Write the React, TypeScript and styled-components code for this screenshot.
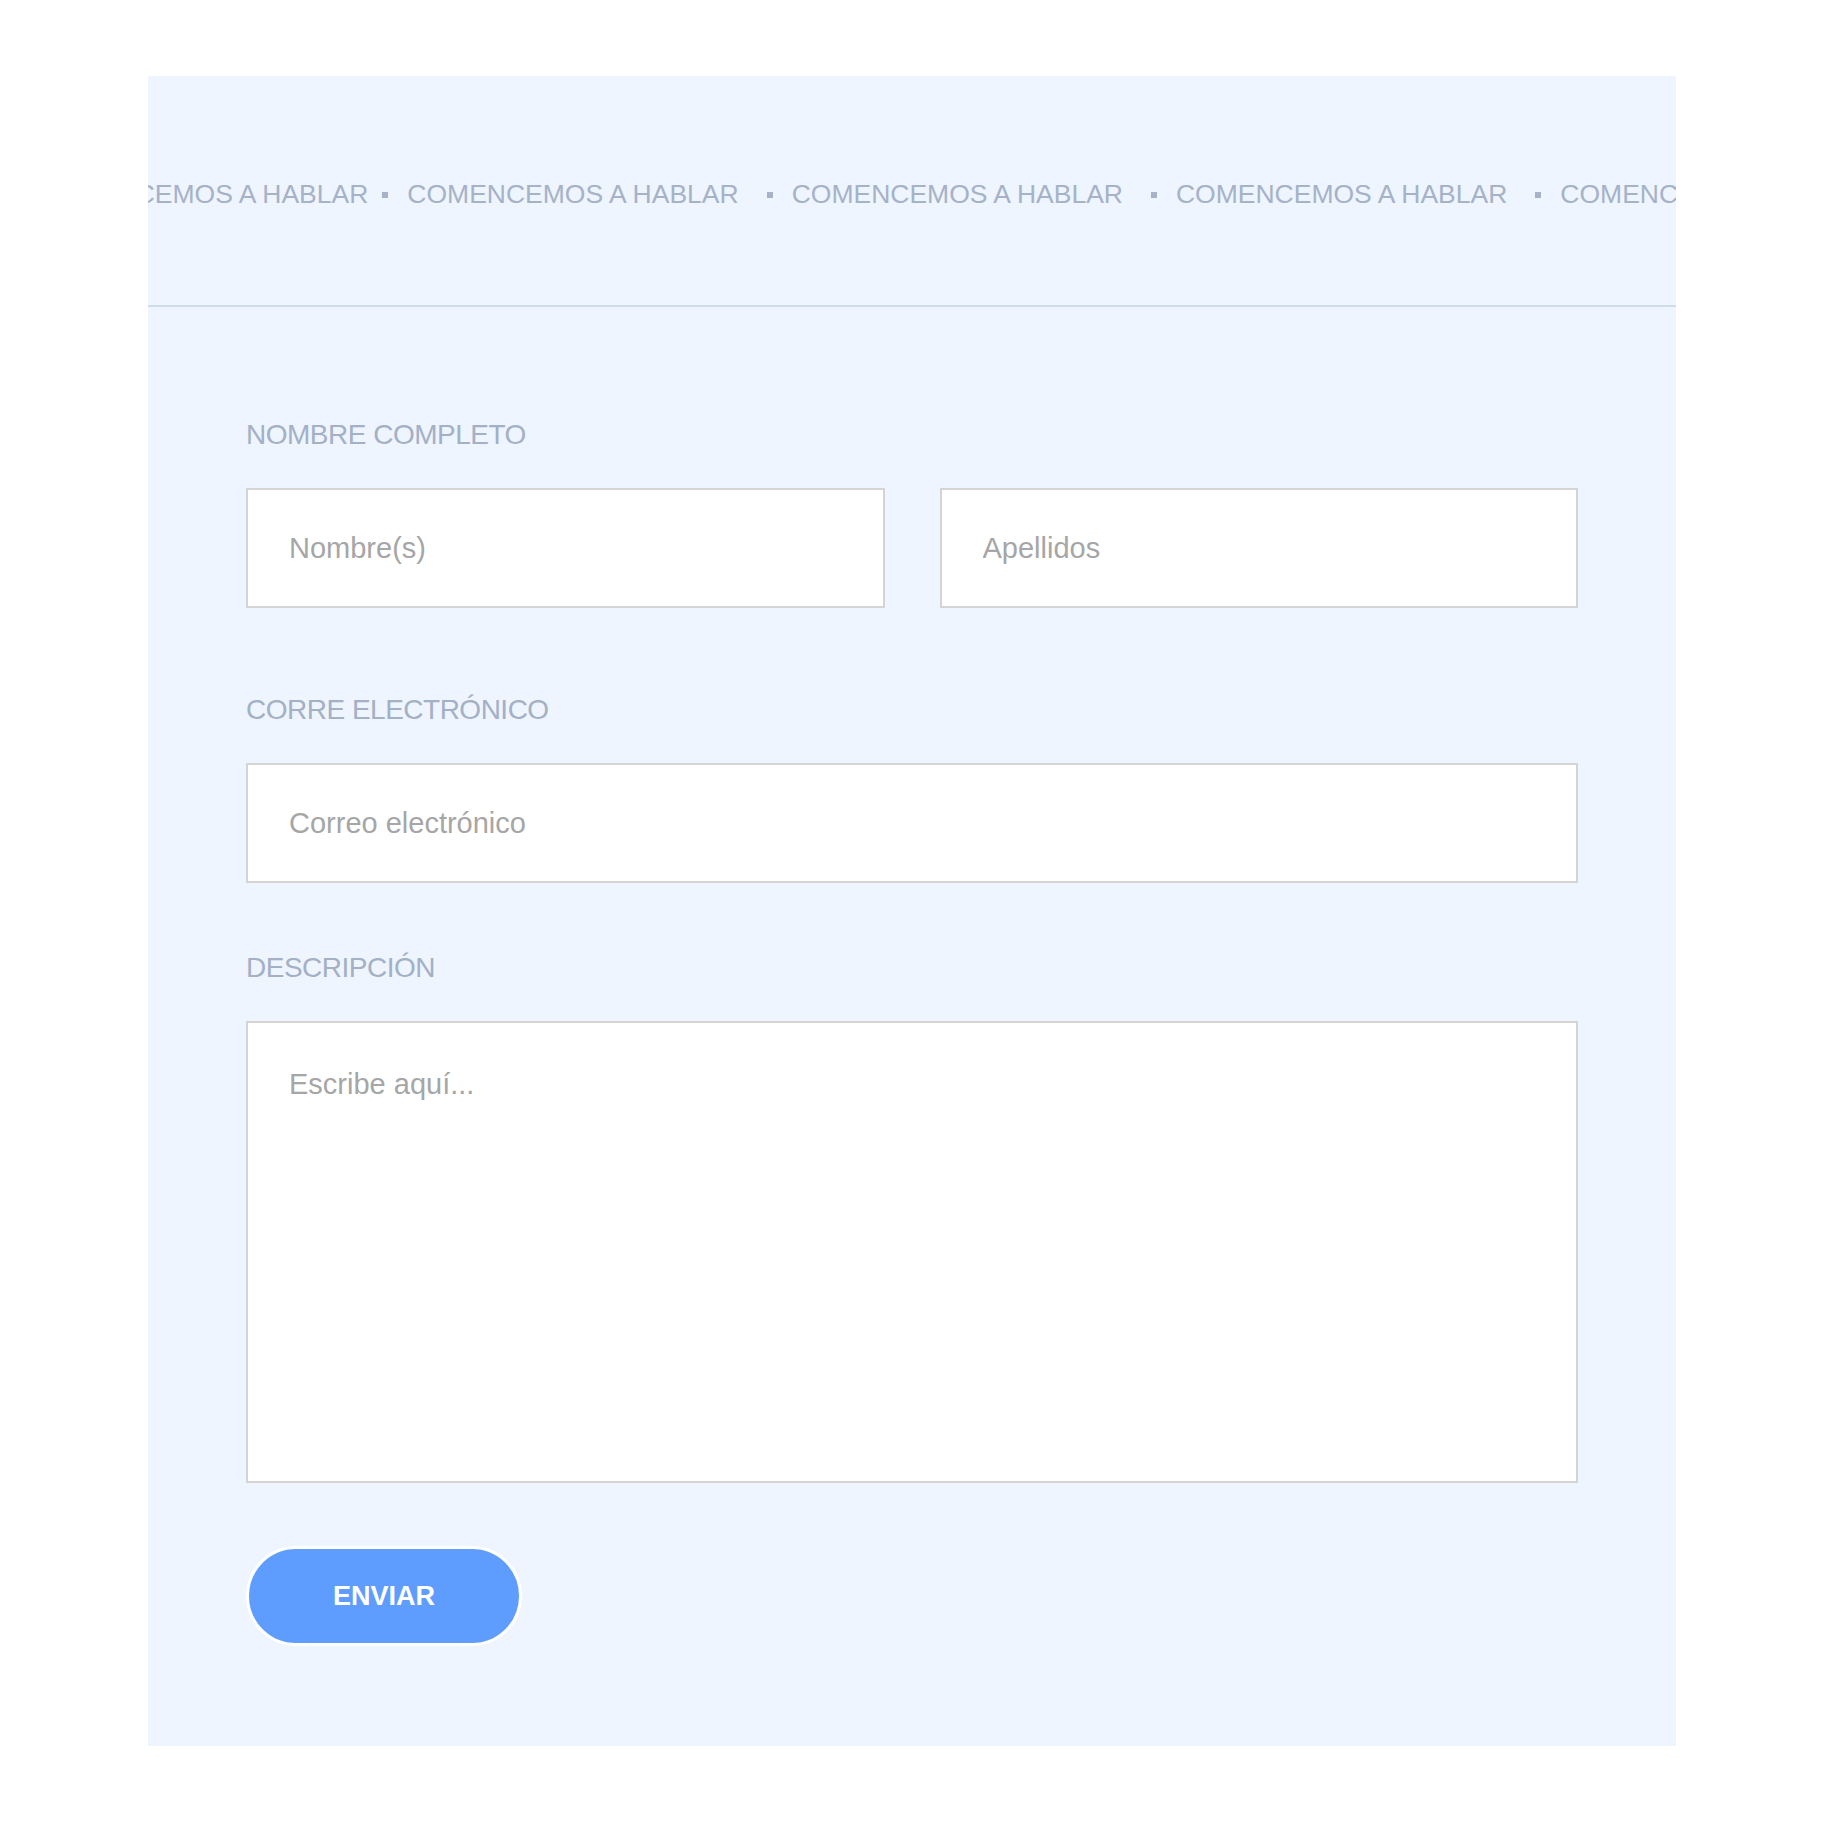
import React from 'react'
import styled, { createGlobalStyle } from 'styled-components'

const GlobalStyle = createGlobalStyle`
  body {
    margin: 0;
    background: #ffffff;
    font-family: "Liberation Sans", Arial, sans-serif;
  }
`

const Panel = styled.section`
  width: 1528px;
  margin: 76px auto 0 auto;
  background-color: #eef5ff;
  overflow: hidden;
`

const Marquee = styled.div`
  padding: 103px 0 96px 0;
  border-bottom: 2px solid #d0dcec;
  overflow: hidden;
`

// the strip is scrolled part way, so the first phrase is cut at the left edge
const Track = styled.div`
  display: flex;
  align-items: center;
  white-space: nowrap;
  transform: translateX(-111px);
`

const MarqueeText = styled.span`
  font-size: 26.5px;
  line-height: 30px;
  color: #a5b2c7;
`

const Dot = styled.span<{ $lead?: boolean }>`
  flex: none;
  width: 6px;
  height: 6px;
  margin: 2px 19px 0 ${(p) => (p.$lead ? 14 : 28)}px;
  background-color: #a5b2c7;
`

const Form = styled.form`
  display: flex;
  flex-direction: column;
  padding: 112px 98px 100px 98px;
`

const Group = styled.div<{ $gap: number }>`
  display: flex;
  flex-direction: column;
  margin-bottom: ${(p) => p.$gap}px;
`

const Label = styled.label`
  font-size: 28px;
  line-height: 32px;
  letter-spacing: -0.5px;
  color: #a3b0c5;
  margin-bottom: 37px;
`

const Row = styled.div`
  display: grid;
  grid-template-columns: 1fr 1fr;
  gap: 55px;
`

const fieldStyles = `
  box-sizing: border-box;
  width: 100%;
  border: 2px solid #d4d4d4;
  border-radius: 0;
  background-color: #ffffff;
  padding: 0 41px;
  font-family: "Liberation Sans", Arial, sans-serif;
  font-size: 29px;
  color: #555555;
  outline: none;

  &::placeholder {
    color: #a6a6a6;
  }
`

const Input = styled.input`
  ${fieldStyles}
  height: 120px;
`

const TextArea = styled.textarea`
  ${fieldStyles}
  display: block;
  height: 462px;
  padding-top: 45px;
  resize: none;
`

const SubmitButton = styled.button`
  box-sizing: border-box;
  width: 276px;
  height: 100px;
  border: 3px solid #ffffff;
  border-radius: 50px;
  background-color: #5e9dfe;
  color: #ffffff;
  font-family: "Liberation Sans", Arial, sans-serif;
  font-size: 27px;
  font-weight: 700;
  cursor: pointer;
`

const items = Array.from({ length: 6 })

export default function App() {
  return (
    <>
      <GlobalStyle />
      <Panel>
        <Marquee>
          <Track>
            {items.map((_, i) => (
              <React.Fragment key={i}>
                <MarqueeText>COMENCEMOS A HABLAR</MarqueeText>
                <Dot $lead={i === 0} />
              </React.Fragment>
            ))}
          </Track>
        </Marquee>
        <Form onSubmit={(e) => e.preventDefault()}>
          <Group $gap={86}>
            <Label>NOMBRE COMPLETO</Label>
            <Row>
              <Input placeholder="Nombre(s)" />
              <Input placeholder="Apellidos" />
            </Row>
          </Group>
          <Group $gap={69}>
            <Label>CORRE ELECTRÓNICO</Label>
            <Input type="email" placeholder="Correo electrónico" />
          </Group>
          <Group $gap={63}>
            <Label>DESCRIPCIÓN</Label>
            <TextArea placeholder="Escribe aquí..." />
          </Group>
          <div>
            <SubmitButton type="submit">ENVIAR</SubmitButton>
          </div>
        </Form>
      </Panel>
    </>
  )
}
